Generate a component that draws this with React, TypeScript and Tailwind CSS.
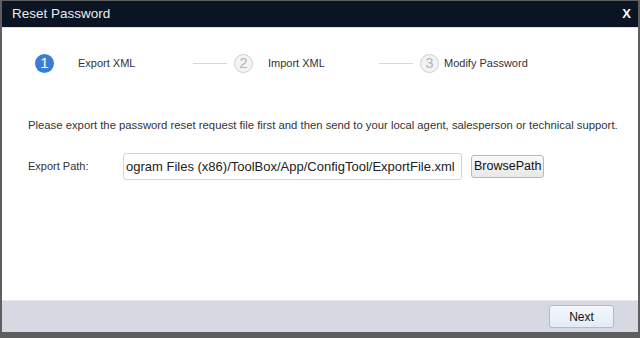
import React from "react";

const font = { fontFamily: '"Liberation Sans", Arial, sans-serif' };

function StepCircle({ n, active }: { n: number; active?: boolean }) {
  return active ? (
    <div className="flex h-[19px] w-[19px] items-center justify-center rounded-full bg-[#3b7dd4] text-[15px] text-white">
      {n}
    </div>
  ) : (
    <div className="flex h-[19px] w-[19px] items-center justify-center rounded-full border border-[#cfcfcf] bg-[#f3f3f3] text-[15px] text-[#b5b5b5]">
      {n}
    </div>
  );
}

export default function App() {
  return (
    <div
      className="flex h-[338px] w-[640px] flex-col border-x-2 border-b-[6px] border-[#5e5e5e] bg-white"
      style={font}
    >
      <div className="flex h-[27px] items-center justify-between border-t border-[#5e5e5e] bg-[#0a1423] pl-[10px] pr-[7px]">
        <span className="text-[13.5px] text-[#e8ecf0]">Reset Password</span>
        <span className="text-[13px] font-bold text-white">X</span>
      </div>

      <div className="flex-1 border-t border-[#e0e0e0]">
        <div className="mt-[25px] flex h-[20px] items-center pl-[33px] text-[11px] text-[#333]">
          <StepCircle n={1} active />
          <span className="ml-[24px] w-[115px]">Export XML</span>
          <div className="h-px w-[34px] bg-[#d8d8d8]" />
          <div className="ml-[7px]">
            <StepCircle n={2} />
          </div>
          <span className="ml-[15px] w-[111px]">Import XML</span>
          <div className="h-px w-[34px] bg-[#d8d8d8]" />
          <div className="ml-[7px]">
            <StepCircle n={3} />
          </div>
          <span className="ml-[5px]">Modify Password</span>
        </div>

        <p className="mt-[44px] pl-[26px] text-[11.3px] text-[#333]">
          Please export the password reset request file first and then send to your local agent, salesperson or technical support.
        </p>

        <div className="mt-[19px] flex items-center pl-[26px]">
          <span className="w-[95px] text-[11px] text-[#333]">Export Path:</span>
          <div className="flex h-[27px] w-[339px] items-center overflow-hidden rounded-[3px] border border-[#d4d4d4] bg-white">
            <span className="ml-[2px] whitespace-nowrap text-[13px] text-[#222]">
              ogram Files (x86)/ToolBox/App/ConfigTool/ExportFile.xml
            </span>
          </div>
          <button className="ml-[9px] h-[23px] rounded-[3px] border border-[#b8b8b8] bg-gradient-to-b from-[#fafafa] to-[#e8e8e8] px-[2px] text-[12.5px] text-[#111]">
            BrowsePath
          </button>
        </div>
      </div>

      <div className="flex h-[32px] items-center justify-end border-t border-[#e6e6ea] bg-[#d6d9e2] pr-[24px]">
        <button className="h-[23px] w-[65px] rounded-[3px] border border-[#a9bdd6] bg-gradient-to-b from-[#f4f8fd] to-[#e3ecf7] text-[12px] text-[#111]">
          Next
        </button>
      </div>
    </div>
  );
}
